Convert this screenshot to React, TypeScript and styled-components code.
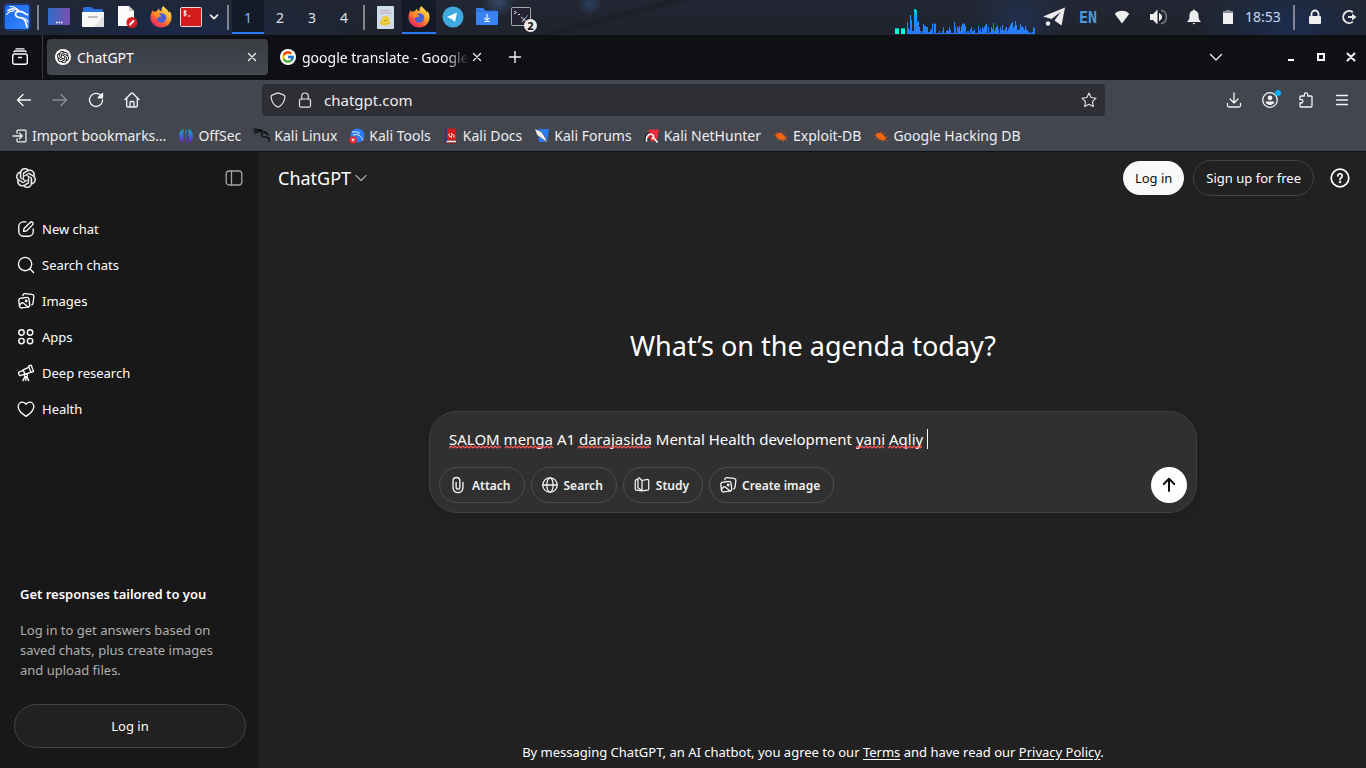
import React from "react";
import styled, { createGlobalStyle, css } from "styled-components";
import { SiKalilinux } from "react-icons/si";
import { FcGoogle } from "react-icons/fc";

const GlobalStyle = createGlobalStyle`
  * { box-sizing: border-box; }
  body {
    margin: 0;
    background: #212121;
    color: #fff;
    font-family: "Noto Sans", "Open Sans", sans-serif;
    font-size: 14px;
  }
  button, input { font: inherit; color: inherit; }
  button { border: 0; padding: 0; background: none; }
  svg { display: block; flex: none; }
`;

const Screen = styled.div`
  display: flex;
  flex-direction: column;
  min-height: 100vh;
`;

/* ---------- Desktop panel ---------- */

const Panel = styled.header`
  display: flex;
  align-items: stretch;
  height: 35px;
  background:
    radial-gradient(ellipse 16px 14px at 498px 2px, #34496a 0%, transparent 100%),
    radial-gradient(ellipse 12px 12px at 590px 4px, #2c3f5e 0%, transparent 100%),
    linear-gradient(165deg, transparent 44%, #1b202b 47%, #1c212c 52%, transparent 55%) 520px 0 / 190px 35px no-repeat,
    radial-gradient(ellipse 200px 40px at 170px 30px, #1b2a47 0%, transparent 100%),
    radial-gradient(ellipse 90px 40px at 1290px 24px, #1c2d4e 0%, transparent 100%),
    radial-gradient(ellipse 50px 30px at 1020px 16px, #222f4c 0%, transparent 100%),
    linear-gradient(#222733, #1f232e);
`;

const PanelCell = styled.button<{ $w?: number; $active?: boolean }>`
  display: flex;
  align-items: center;
  justify-content: center;
  position: relative;
  width: ${(p) => p.$w ?? 34}px;
  padding-bottom: 1px;
  color: #e8e8e8;
  ${(p) =>
    p.$active &&
    css`
      background: #141a28;
      box-shadow: inset 0 -1px #191b22, inset 0 -3px #2777ff;
    `}
`;

const Workspace = styled(PanelCell)`
  color: ${(p) => (p.$active ? "#7fb5f5" : "#e0e0e0")};
`;

const PanelRule = styled.div`
  width: 2px;
  margin: 5px 3px;
  background: #82858c;
`;

const Spring = styled.div`
  flex: 1;
`;

const CountBadge = styled.span`
  position: absolute;
  right: 1px;
  bottom: 3px;
  width: 13px;
  height: 13px;
  border-radius: 50%;
  background: #eee;
  color: #111;
  font-size: 11px;
  font-weight: 700;
  line-height: 13px;
  text-align: center;
`;

const Layout = styled.button`
  width: 34px;
  color: #4d9ad8;
  font-family: "DejaVu Sans Mono", monospace;
  font-size: 15px;
  font-weight: 700;
`;

const Clock = styled.time`
  width: 45px;
  color: #c3d8f0;
  font-size: 14px;
  line-height: 33px;
`;

/* ---------- Browser chrome ---------- */

const TabBar = styled.div`
  display: flex;
  align-items: center;
  height: 45px;
  padding-bottom: 1px;
  background: #0f1014;
  color: #fbfbfe;
`;

const ViewButton = styled.button`
  display: flex;
  align-items: center;
  justify-content: center;
  align-self: stretch;
  width: 43px;
  padding-right: 3px;
  border-right: 1px solid #393a3f;
`;

const Tab = styled.div<{ $active?: boolean }>`
  display: flex;
  align-items: center;
  width: 221px;
  height: 36px;
  margin-left: 4px;
  padding: 0 8px;
  border-radius: 4px;
  font-size: 14px;
  background: ${(p) => (p.$active ? "linear-gradient(#3a3c42, #454850)" : "transparent")};
`;

const TabLabel = styled.span<{ $fade?: boolean }>`
  flex: 1;
  margin-left: 6px;
  overflow: hidden;
  white-space: nowrap;
  ${(p) => p.$fade && css`mask-image: linear-gradient(to left, transparent, #000 24px);`}
`;

const IconButton = styled.button<{ $w?: number; $dim?: boolean }>`
  display: flex;
  align-items: center;
  justify-content: center;
  width: ${(p) => p.$w ?? 36}px;
  height: 36px;
  color: #f4f4f7;
  opacity: ${(p) => (p.$dim ? 0.4 : 1)};
`;

const TabClose = styled(IconButton)`
  width: 16px;
  height: 20px;
`;

const NewTab = styled(IconButton)`
  margin-left: 4px;
`;

const NavBar = styled.div`
  display: flex;
  align-items: center;
  height: 40px;
  padding: 0 6px;
  background: #43464e;
`;

const UrlBar = styled.label`
  display: flex;
  flex: 1;
  align-items: center;
  gap: 11px;
  height: 32px;
  margin: 0 111px 0 112px;
  padding: 0 8px;
  border-radius: 4px;
  background: #2e2f34;
  color: #e4e4e8;
`;

const UrlInput = styled.input`
  flex: 1;
  min-width: 0;
  padding: 0;
  border: 0;
  outline: 0;
  background: none;
  color: #eeeef0;
  font-size: 15px;
`;

const Bookmarks = styled.nav`
  display: flex;
  align-items: center;
  gap: 12px;
  height: 32px;
  padding: 0 12px;
  border-bottom: 1px solid #111215;
  background: #43464e;
`;

const Bookmark = styled.a`
  display: flex;
  align-items: center;
  gap: 4px;
  color: #eeeef0;
  font-size: 14px;
  text-decoration: none;
  white-space: nowrap;
`;

/* ---------- Page ---------- */

const Page = styled.div`
  display: flex;
  flex: 1;
`;

const Sidebar = styled.aside`
  display: flex;
  flex-direction: column;
  width: 260px;
  background: #181818;
  box-shadow: inset -1px 0 #242424;
`;

const SidebarTop = styled.div`
  display: flex;
  align-items: center;
  justify-content: space-between;
  height: 52px;
  padding: 0 16px;
  color: #f3f3f3;
`;

const SideNav = styled.nav`
  display: flex;
  flex: 1;
  flex-direction: column;
  padding: 7px 6px;
`;

const SideLink = styled.a`
  display: flex;
  align-items: center;
  gap: 7px;
  height: 36px;
  padding: 0 11px;
  color: #fff;
  font-size: 13px;
  text-decoration: none;
`;

const Promo = styled.section`
  padding: 0 14px 20px;
`;

const PromoTitle = styled.h2`
  margin: 0 6px 16px;
  font-size: 13px;
  font-weight: 600;
  line-height: 20px;
`;

const PromoText = styled.p`
  margin: 0 16px 24px 6px;
  color: #afafaf;
  font-size: 13px;
  line-height: 20px;
`;

const Pill = styled.button<{ $h: number; $solid?: boolean; $full?: boolean }>`
  width: ${(p) => (p.$full ? "100%" : "auto")};
  height: ${(p) => p.$h}px;
  padding: 0 12px;
  border: ${(p) => (p.$solid ? "0" : "1px solid #424242")};
  border-radius: 22px;
  background: ${(p) => (p.$solid ? "#f9f9f9" : "#212121")};
  color: ${(p) => (p.$solid ? "#0d0d0d" : "#fff")};
  font-size: 13px;
`;

const Main = styled.main`
  display: flex;
  flex: 1;
  flex-direction: column;
  min-width: 0;
`;

const MainHeader = styled.div`
  display: flex;
  align-items: center;
  gap: 9px;
  height: 52px;
  padding: 0 16px 0 18px;
`;

const ModelButton = styled.button`
  display: flex;
  align-items: center;
  gap: 2px;
  font-size: 18px;
`;

const HelpButton = styled.button`
  margin-left: 7px;
`;

const Center = styled.div`
  display: flex;
  flex: 1;
  flex-direction: column;
  align-items: center;
  justify-content: center;
  padding: 0 24px 98px;
`;

const Title = styled.h1`
  margin: 0 0 48px;
  font-size: 27px;
  font-weight: 400;
  line-height: 34px;
`;

const Composer = styled.form`
  width: 100%;
  max-width: 768px;
  padding: 9px;
  border: 1px solid #404040;
  border-radius: 28px;
  background: #303030;
  box-shadow: 0 4px 12px #0000001a;
`;

const PromptField = styled.div`
  position: relative;
  height: 46px;
  padding: 6px 10px;
`;

const PromptInput = styled.input`
  display: block;
  width: 100%;
  height: 24px;
  padding: 0;
  border: 0;
  outline: 0;
  background: none;
  font-size: 15px;
`;

const SpellMarks = styled.svg`
  position: absolute;
  top: 6px;
  left: 10px;
  pointer-events: none;
`;

const Actions = styled.div`
  display: flex;
  align-items: center;
  gap: 6px;
`;

const ActionPill = styled.button`
  display: flex;
  align-items: center;
  gap: 5px;
  height: 36px;
  padding: 0 13px 0 9px;
  border: 1px solid #4d4d4d;
  border-radius: 18px;
  color: #f3f3f3;
  font-size: 12px;
  font-weight: 600;
`;

const SendButton = styled.button`
  display: flex;
  align-items: center;
  justify-content: center;
  width: 36px;
  height: 36px;
  border-radius: 50%;
  background: #fff;
  color: #0d0d0d;
`;

const Legal = styled.footer`
  height: 32px;
  font-size: 13px;
  line-height: 32px;
  text-align: center;

  a { color: inherit; text-underline-offset: 2px; }
`;

/* ---------- Icons ---------- */

type IconProps = { size?: number; color?: string; width?: number; children: React.ReactNode; box?: number };

const Line = ({ size = 20, box = 20, color = "currentColor", width = 1.4, children }: IconProps) => (
  <svg
    width={size}
    height={size}
    viewBox={`0 0 ${box} ${box}`}
    fill="none"
    stroke={color}
    strokeWidth={width}
    strokeLinecap="round"
    strokeLinejoin="round"
    aria-hidden
  >
    {children}
  </svg>
);

const OpenAiMark = ({ size, color }: { size: number; color: string }) => (
  <svg width={size} height={size} viewBox="0 0 24 24" fill={color} stroke={color} strokeWidth=".3" aria-hidden>
    <path d="M22.2819 9.8211a5.9847 5.9847 0 0 0-.5157-4.9108 6.0462 6.0462 0 0 0-6.5098-2.9A6.0651 6.0651 0 0 0 4.9807 4.1818a5.9847 5.9847 0 0 0-3.9977 2.9 6.0462 6.0462 0 0 0 .7427 7.0966 5.98 5.98 0 0 0 .511 4.9107 6.051 6.051 0 0 0 6.5146 2.9001A5.9847 5.9847 0 0 0 13.2599 24a6.0557 6.0557 0 0 0 5.7718-4.2058 5.9894 5.9894 0 0 0 3.9977-2.9001 6.0557 6.0557 0 0 0-.7475-7.0729zm-9.022 12.6081a4.4755 4.4755 0 0 1-2.8764-1.0408l.1419-.0804 4.7783-2.7582a.7948.7948 0 0 0 .3927-.6813v-6.7369l2.02 1.1686a.071.071 0 0 1 .038.052v5.5826a4.504 4.504 0 0 1-4.4945 4.4944zm-9.6607-4.1254a4.4708 4.4708 0 0 1-.5346-3.0137l.142.0852 4.783 2.7582a.7712.7712 0 0 0 .7806 0l5.8428-3.3685v2.3324a.0804.0804 0 0 1-.0332.0615L9.74 19.9502a4.4992 4.4992 0 0 1-6.1408-1.6464zM2.3408 7.8956a4.485 4.485 0 0 1 2.3655-1.9728V11.6a.7664.7664 0 0 0 .3879.6765l5.8144 3.3543-2.0201 1.1685a.0757.0757 0 0 1-.071 0l-4.8303-2.7865A4.504 4.504 0 0 1 2.3408 7.872zm16.5963 3.8558L13.1038 8.364 15.1192 7.2a.0757.0757 0 0 1 .071 0l4.8303 2.7913a4.4944 4.4944 0 0 1-.6765 8.1042v-5.6772a.79.79 0 0 0-.407-.667zm2.0107-3.0231l-.142-.0852-4.7735-2.7818a.7759.7759 0 0 0-.7854 0L9.409 9.2297V6.8974a.0662.0662 0 0 1 .0284-.0615l4.8303-2.7866a4.4992 4.4992 0 0 1 6.6802 4.66zM8.3065 12.863l-2.02-1.1638a.0804.0804 0 0 1-.038-.0567V6.0742a4.4992 4.4992 0 0 1 7.3757-3.4537l-.142.0805L8.704 5.459a.7948.7948 0 0 0-.3927.6813zm1.0976-2.3654l2.602-1.4998 2.6069 1.4998v2.9994l-2.5974 1.4997-2.6067-1.4997Z" />
  </svg>
);

const KaliMenu = () => (
  <svg width="30" height="30" viewBox="0 0 30 30" aria-hidden>
    <defs>
      <linearGradient id="kali" x1="0" y1="0" x2="1" y2="1">
        <stop offset="0" stopColor="#1769f0" />
        <stop offset="1" stopColor="#3a86ff" />
      </linearGradient>
    </defs>
    <rect x="1" y="1" width="28" height="28" rx="5" fill="#1b5fd8" opacity=".35" />
    <rect x="3" y="3" width="24" height="24" rx="2" fill="url(#kali)" />
    <g fill="none" stroke="#fff" strokeLinecap="round">
      <path d="M6 8.500c4-2.500 8-2 11 .8" strokeWidth="1.600" />
      <path d="M8 4.500c4 0 7 1.500 9 4.800" strokeWidth="1.200" />
      <path d="M4.500 12.500c2.500-3 5-4 8-3.500" strokeWidth="1.100" />
      <path d="M17 9.300c-3.500 0-4.500 3-2.500 5 2 1.800 5 1 7.300 2.700 1.800 1.500 2.200 4 3.200 8" strokeWidth="1.700" />
      <path d="M17 9.300c3 0 5 1 6.500 2.700l2 .6" strokeWidth="1.700" />
      <path d="M19.500 16c3.500.3 5.500 1.500 6.500 4" strokeWidth="1.200" />
    </g>
  </svg>
);

const ShowDesktop = () => (
  <svg width="22" height="18" viewBox="0 0 22 18" aria-hidden>
    <defs>
      <linearGradient id="desk" x1="0" y1="0" x2="1" y2="0">
        <stop offset="0" stopColor="#2f6cc9" />
        <stop offset="1" stopColor="#7a4fb0" />
      </linearGradient>
    </defs>
    <rect width="22" height="17" rx="1" fill="url(#desk)" />
    <path d="M8 14.500h1.500M10.500 14.500h1.500M13 14.500h1.500" stroke="#fff" strokeWidth="1.400" />
  </svg>
);

const Folder = () => (
  <svg width="22" height="20" viewBox="0 0 22 20" aria-hidden>
    <path d="M1 2a2 2 0 0 1 2-2h6l3 2h7a2 2 0 0 1 2 2v5H1z" fill="#2a6fdb" />
    <path d="M0 5h22v14a1 1 0 0 1-1 1H1a1 1 0 0 1-1-1z" fill="#f7f7f7" />
    <path d="M12 20 22 8v11a1 1 0 0 1-1 1z" fill="#e2e2e2" />
    <rect x="6" y="9" width="10" height="2" rx="1" fill="#bcbcbc" />
  </svg>
);

const EditDoc = () => (
  <svg width="22" height="22" viewBox="0 0 22 22" aria-hidden>
    <path d="M2 0h11l5 5v15H2z" fill="#fbfbfb" />
    <path d="M13 0l5 5h-5z" fill="#c8c8c8" />
    <circle cx="16" cy="16.500" r="5.500" fill="#d41e24" />
    <path d="M13.500 19l4.500-4.500" stroke="#fff" strokeWidth="2" />
  </svg>
);

const Firefox = () => (
  <svg width="22" height="22" viewBox="0 0 22 22" aria-hidden>
    <defs>
      <linearGradient id="fox" x1=".9" y1="0" x2=".2" y2="1">
        <stop offset="0" stopColor="#fff36b" />
        <stop offset=".4" stopColor="#ffab2e" />
        <stop offset=".7" stopColor="#ff5a36" />
        <stop offset="1" stopColor="#e31b6d" />
      </linearGradient>
    </defs>
    <path
      d="M13.500 0c1 2 4.500 3.500 5.300 6.500.6-.2.700-1 .6-1.700C21 7 21.600 9 21.500 11.500 21.300 17.500 17 21.500 11 21.500S.5 17 .5 11.500c0-3 .8-5.500 2.500-7.500.1 1 .2 1.500.6 2C4.500 5.500 6 5 7 5.200 7.500 4 8.500 3 9.500 2.800c-.3.800-.3 1.500 0 2 1 .2 1.500.1 2 .1C11 3.500 12 1 13.500 0z"
      fill="url(#fox)"
    />
    <circle cx="11.500" cy="12" r="4.800" fill="#4a62d8" />
    <path d="M4 7.500c2.500-1 5 0 6.500 1.500 1 1 .5 1.800-.7 2-1.300.1-2.300.4-2.300 1.500-1.500-.5-3-2.500-3.500-5z" fill="#ff8a23" />
  </svg>
);

const RootTerminal = () => (
  <svg width="22" height="20" viewBox="0 0 22 20" aria-hidden>
    <rect x=".5" y=".5" width="21" height="19" rx="1" fill="#d21b1b" stroke="#f0d8d8" />
    <path d="M6.500 4.500c-1-.8-2.800-.5-2.800.6 0 1.300 2.800.8 2.800 2.200 0 1.100-2 1.400-3 .5M5 3v6.500M8 9h2.500" stroke="#fff" fill="none" />
  </svg>
);

const Notes = () => (
  <svg width="17" height="23" viewBox="0 0 17 23" aria-hidden>
    <rect width="17" height="23" rx="1" fill="#cfdcec" />
    <path d="M4 4.500h9M2.500 7h12" stroke="#c59aa4" strokeWidth=".8" />
    <circle cx="8.500" cy="14" r="4" fill="#f0cf3c" />
    <path d="M4 15v2.500c3 1.500 6 1.500 9-1" stroke="#e8c23a" strokeWidth="2" fill="none" />
    <path d="M7 14c1 1.200 2.500 1 3.500-.3" stroke="#a87a18" strokeWidth=".8" fill="none" />
  </svg>
);

const TelegramDisc = () => (
  <svg width="22" height="22" viewBox="0 0 22 22" aria-hidden>
    <circle cx="11" cy="11" r="10.500" fill="#3fa9e0" />
    <path d="M5 11l10-4.500-2 9.500-3.500-3z" fill="#fff" />
  </svg>
);

const DownloadFolder = () => (
  <svg width="22" height="18" viewBox="0 0 22 18" aria-hidden>
    <path d="M0 3V1a1 1 0 0 1 1-1h6l3 3h11a1 1 0 0 1 1 1v12a1 1 0 0 1-1 1H1a1 1 0 0 1-1-1z" fill="#3b82f0" />
    <path d="M1 3h20" stroke="#2a62c4" />
    <path d="M11 6v6M8.500 9.800 11 12.300l2.500-2.500M8 13.500h6" stroke="#e8f0ff" strokeWidth="1.200" fill="none" />
  </svg>
);

const Terminal = () => (
  <svg width="20" height="20" viewBox="0 0 20 20" aria-hidden>
    <rect x=".5" y=".5" width="19" height="18" rx="1" fill="#242131" stroke="#aaa6b0" />
    <path d="M3 4l2.500 1.500L3 7M7 7.500h2M10 10l6 5M16 9l-5 6" stroke="#d8d8e4" fill="none" />
    <path d="M14 11l3-3" stroke="#3e7fd0" />
  </svg>
);

const spectrumBars = [
  12, 6, 4, 19, 14, 3, 3, 25, 25, 24, 12, 13, 7, 3, 1, 3, 10, 8, 8, 7, 7, 2, 2, 4, 5, 10, 1, 11, 10, 1, 1, 1, 3,
  1, 1, 3, 7, 1, 1, 3, 4, 3, 7, 4, 1, 1, 1, 12, 7, 1, 8, 6, 8, 3, 8, 10, 11, 10, 8, 1, 3, 3, 1, 5, 7, 3, 3, 5, 1, 1,
  1, 8, 3, 5, 2, 7, 5, 7, 9, 10, 1, 7, 1, 2, 7, 5, 11, 3, 6, 7, 9, 5, 1, 7, 4, 9, 4, 3, 6, 7, 3, 5, 7, 9, 11, 12, 6,
  8, 13, 9, 4, 4, 5, 10, 7, 8, 6, 4, 8, 5, 3, 3, 1, 2, 1, 2, 7, 6,
];

const Spectrum = () => (
  <svg width="142" height="35" viewBox="0 0 142 35" aria-hidden>
    <defs>
      <linearGradient id="spec" gradientUnits="userSpaceOnUse" x1="0" y1="8" x2="0" y2="34">
        <stop offset="0" stopColor="#14c8e8" />
        <stop offset=".5" stopColor="#1e90ff" />
        <stop offset="1" stopColor="#2777ff" />
      </linearGradient>
    </defs>
    <path d="M0 28h4v6H0zM6 28h4v6H6z" fill="#00ffd8" />
    <path d="M0 28.500h4M6 28.500h4" stroke="#0bb0a0" />
    <g fill="url(#spec)">
      {spectrumBars.map((h, i) => (
        <rect key={i} x={12 + i} y={34 - h} width="1" height={h} />
      ))}
    </g>
  </svg>
);

const Wifi = () => (
  <svg width="16" height="14" viewBox="0 0 16 14" fill="#efefef" aria-hidden>
    <path d="M8 13.500.8 4C2.500 1.800 5 .8 8 .8s5.500 1 7.200 3.200z" />
  </svg>
);

const Speaker = () => (
  <svg width="18" height="16" viewBox="0 0 18 16" aria-hidden>
    <path d="M1 5h3l4.500-4.500v15L4 11H1z" fill="#efefef" />
    <path d="M10.500 4.500a4 4 0 0 1 0 7z" fill="#efefef" stroke="#efefef" />
    <path d="M12 1.200a7 7 0 0 1 0 13.600" fill="none" stroke="#777b84" strokeWidth="1.500" />
  </svg>
);

const Bell = () => (
  <svg width="16" height="16" viewBox="0 0 16 16" fill="#efefef" aria-hidden>
    <path d="M7 1.500a1 1 0 0 1 2 0C11.500 2 12.500 4 12.500 6.500c0 3 .5 4.500 2.500 6.500H1c2-2 2.500-3.500 2.500-6.500C3.500 4 4.500 2 7 1.500zM6.500 14h3l-1.500 1.500z" />
  </svg>
);

const Battery = () => (
  <svg width="12" height="16" viewBox="0 0 12 16" aria-hidden>
    <path d="M4 1h4v1h3v2H1V2h3z" fill="#8a8d94" />
    <path d="M1 4h10v11H1z" fill="#efefef" />
  </svg>
);

const PanelLock = () => (
  <svg width="14" height="16" viewBox="0 0 14 16" aria-hidden>
    <path d="M3.500 7V5a3.500 3.500 0 0 1 7 0v2" fill="none" stroke="#efefef" strokeWidth="1.800" />
    <rect x="1" y="7" width="12" height="8" rx="1" fill="#efefef" />
  </svg>
);

const LogOutIcon = () => (
  <svg width="18" height="16" viewBox="0 0 18 16" aria-hidden>
    <path d="M12.800 3.200a6 6 0 1 0 0 9.600" fill="none" stroke="#e4e4e4" strokeWidth="2" />
    <path d="M8 7h4V4.500L16.500 8 12 11.500V9H8z" fill="#e4e4e4" />
  </svg>
);

const Cross = ({ size = 10, width = 1.2 }: { size?: number; width?: number }) => (
  <Line size={size} box={10} width={width}>
    <path d="M1.500 1.500l7 7M8.500 1.500l-7 7" />
  </Line>
);

const ImagesIcon = ({ size = 18 }: { size?: number }) => (
  <Line size={size} width={1.5}>
    <path d="M4.300 6.900l6.400-.9a2.300 2.300 0 0 1 2.600 2l.8 6.200a2.300 2.300 0 0 1-2 2.600l-6.700.9a2.300 2.300 0 0 1-2.600-2l-.8-6.200a2.300 2.300 0 0 1 2.300-2.600z" />
    <path d="M2.700 14.800l2.100-2.300a1.600 1.600 0 0 1 2.200-.2l5.400 4.400" />
    <path d="M6.500 4a2.300 2.300 0 0 1 2.600-2.200l7.400.9A2.300 2.300 0 0 1 18.700 5.300l-.9 7.200a2.300 2.300 0 0 1-1.300 1.700" />
    <circle cx="10.200" cy="10" r=".8" fill="currentColor" />
  </Line>
);

const sideItems: [string, React.ReactNode][] = [
  [
    "New chat",
    <Line size={18} width={1.5}>
      <path d="M10 2H7A5 5 0 0 0 2 7v6a5 5 0 0 0 5 5h6a5 5 0 0 0 5-5V10" />
      <path d="M7.300 12.700l.5-3.200 6.800-6.800a1.900 1.900 0 0 1 2.700 2.700l-6.800 6.800z" />
    </Line>,
  ],
  [
    "Search chats",
    <Line size={18} width={1.5}>
      <circle cx="9" cy="9" r="7.400" />
      <path d="M14.400 14.400l4 4" />
    </Line>,
  ],
  ["Images", <ImagesIcon />],
  [
    "Apps",
    <Line size={18} width={1.6}>
      <circle cx="5" cy="5" r="3" />
      <circle cx="14.500" cy="5" r="3" />
      <circle cx="5" cy="14.500" r="3" />
      <circle cx="14.500" cy="14.500" r="3" />
    </Line>,
  ],
  [
    "Deep research",
    <Line size={18} width={1.5}>
      <path d="M12.800 2.300l2.900-1.100 2.700 7-2.900 1.100zM12.900 3.800L6.800 6.500l2 5 6.300-2.100M6.900 7.200L2.300 9a1 1 0 0 0-.6 1.300l.8 2a1 1 0 0 0 1.300.6l4.500-1.700" />
      <circle cx="9.800" cy="12.500" r="1.700" />
      <path d="M8.800 14l-2.200 4.500M10.800 14l2.200 4.500M9.800 14.300v4" />
    </Line>,
  ],
  [
    "Health",
    <Line size={18} width={1.5}>
      <path d="M10 18.200C6 15.500 1.300 12 1.300 7.400 1.300 4.400 3.500 2.400 6 2.400c1.700 0 3.200.8 4 2.400.8-1.600 2.300-2.400 4-2.400 2.500 0 4.700 2 4.700 5 0 4.600-4.700 8.100-8.700 10.800z" />
    </Line>,
  ],
];

const Bug = () => (
  <svg width="16" height="16" viewBox="0 0 16 16" aria-hidden>
    <path d="M3.500 6c2-2 5-1.500 6.500.5s3.500 3 2.500 4.500-4.500 1.500-6.500 0S2 7.500 3.500 6z" fill="#f26411" />
    <path d="M3 4l2 2M1 7h3M2.500 10.500 5 9M5 12.500l2-2M8 3.500 8 6M12 5l-2 2.500M14.500 9 12 9.500M14.500 13 12 11M10 14l-.5-2" stroke="#e05a10" strokeWidth=".8" />
  </svg>
);

const bookmarks: [string, React.ReactNode][] = [
  [
    "Import bookmarks…",
    <Line size={16} box={16} width={1.3}>
      <path d="M5 5V3.200a1 1 0 0 1 1-1h7a1 1 0 0 1 1 1v9.600a1 1 0 0 1-1 1H6a1 1 0 0 1-1-1V11M1 8h9M7.500 5.300 10.200 8l-2.700 2.700" />
    </Line>,
  ],
  [
    "OffSec",
    <svg width="16" height="16" viewBox="0 0 16 16" aria-hidden>
      <defs>
        <linearGradient id="offsec" gradientUnits="userSpaceOnUse" x1="0" y1="1" x2="0" y2="15">
          <stop offset="0" stopColor="#16b0c8" />
          <stop offset="1" stopColor="#6a1bd8" />
        </linearGradient>
      </defs>
      <path d="M5.500 1v14C2.500 13.800 1 11 1 8s1.500-5.800 4.500-7zM7.400 1.500h1.200v13H7.400zM10.500 1C13.500 2.200 15 5 15 8s-1.500 5.800-4.500 7z" fill="url(#offsec)" />
    </svg>,
  ],
  ["Kali Linux", <SiKalilinux size={17} color="#0c0c0e" stroke="#0c0c0e" strokeWidth={1} />],
  [
    "Kali Tools",
    <svg width="16" height="16" viewBox="0 0 16 16" aria-hidden>
      <circle cx="8.500" cy="7.500" r="7" fill="#2a7bf6" />
      <path d="M3 4c3-.5 6 0 8 1.500M4 7c3-1 6-.5 7.500 1.500s2 2 2.500 4" stroke="#e8f1ff" fill="none" />
      <circle cx="4" cy="12" r="3.800" fill="#e3242b" />
      <path d="M2.300 11h3.400M3.400 11v2.500M4.800 11v2.500" stroke="#fff" strokeWidth=".8" />
    </svg>,
  ],
  [
    "Kali Docs",
    <svg width="16" height="16" viewBox="0 0 16 16" aria-hidden>
      <path d="M2 .5h11v12H4a2 2 0 0 0-2 2z" fill="#d61a1a" />
      <path d="M2 .5h2v14H2z" fill="#273a78" />
      <path d="M4 12.800h9v1.800H3z" fill="#eee" />
      <path d="M3 14.500h10v1H3z" fill="#a51212" />
      <path d="M6 5.500v2c0 1.500 2.500 1.500 2.500 0s2.500-1.500 2.500 0v2M8.500 5v1M8.500 8.500v1.500" stroke="#fff" fill="none" />
    </svg>,
  ],
  [
    "Kali Forums",
    <svg width="16" height="16" viewBox="0 0 16 16" aria-hidden>
      <path d="M3 1h12l-2 13H5z" fill="#2a7bf6" />
      <path d="M.5.800 7 3.500l3 4 3.500 7-5-3.500L3 7z" fill="#f4f4f4" stroke="#333" strokeWidth=".5" />
    </svg>,
  ],
  [
    "Kali NetHunter",
    <svg width="16" height="16" viewBox="0 0 16 16" aria-hidden>
      <path d="M5 1.500h10l-2 10L8 14 3 9z" fill="#ec2a3a" />
      <path d="M2.500 13.500C1.500 10 4 5 8 6.500c2.500 1 2 4-.5 3.500M8.500 10c2 .5 3.500 2 5 4.500" stroke="#f2f2f2" strokeWidth="1.800" fill="none" />
      <path d="M1 13c-.5-4 1.500-8 5-8.500M5 12c0-2 1-3 2.500-3" stroke="#151515" fill="none" />
    </svg>,
  ],
  ["Exploit-DB", <Bug />],
  ["Google Hacking DB", <Bug />],
];

/* Horizontal extents of the misspelled words in the prompt. */
const misspelled = [
  [0, 53],
  [56, 105],
  [129, 202],
  [407, 436],
  [439, 474],
];

const squiggle = ([from, to]: number[]) => {
  let d = `M${from} 21`;
  for (let x = from, up = true; x + 2 <= to; x += 2, up = !up) d += `L${x + 2} ${up ? 19 : 21}`;
  return d;
};

/* ---------- App ---------- */

export default function App() {
  return (
    <Screen>
      <GlobalStyle />
      <Panel>
        <PanelCell aria-label="Applications"><KaliMenu /></PanelCell>
        <PanelRule />
        <PanelCell aria-label="Show desktop"><ShowDesktop /></PanelCell>
        <PanelCell aria-label="Files"><Folder /></PanelCell>
        <PanelCell aria-label="Text editor"><EditDoc /></PanelCell>
        <PanelCell aria-label="Firefox"><Firefox /></PanelCell>
        <PanelCell aria-label="Root terminal" $w={26}><RootTerminal /></PanelCell>
        <PanelCell aria-label="More terminals" $w={20}>
          <Line size={10} box={10} width={1.7}><path d="M1.500 3.200 5 6.700l3.500-3.500" /></Line>
        </PanelCell>
        <PanelRule />
        <Workspace $w={32} $active>1</Workspace>
        <Workspace $w={32}>2</Workspace>
        <Workspace $w={32}>3</Workspace>
        <Workspace $w={32}>4</Workspace>
        <PanelRule />
        <PanelCell aria-label="Notes"><Notes /></PanelCell>
        <PanelCell aria-label="Firefox window" $active><Firefox /></PanelCell>
        <PanelCell aria-label="Telegram"><TelegramDisc /></PanelCell>
        <PanelCell aria-label="Downloads"><DownloadFolder /></PanelCell>
        <PanelCell aria-label="Terminals"><Terminal /><CountBadge>2</CountBadge></PanelCell>
        <Spring />
        <Spectrum />
        <PanelCell aria-label="Telegram status">
          <svg width="22" height="20" viewBox="0 0 22 20" fill="#ececec" aria-hidden>
            <path d="M0 9.500 22 .5 18.500 18.500 11.500 13.500 17.500 5 8.500 12z" />
            <circle cx="5" cy="16.500" r="2.200" />
          </svg>
        </PanelCell>
        <Layout>EN</Layout>
        <PanelCell aria-label="Network"><Wifi /></PanelCell>
        <PanelCell aria-label="Volume" $w={38}><Speaker /></PanelCell>
        <PanelCell aria-label="Notifications"><Bell /></PanelCell>
        <PanelCell aria-label="Battery"><Battery /></PanelCell>
        <Clock>18:53</Clock>
        <PanelRule />
        <PanelCell aria-label="Lock screen"><PanelLock /></PanelCell>
        <PanelCell aria-label="Log out"><LogOutIcon /></PanelCell>
      </Panel>

      <TabBar>
        <ViewButton aria-label="Recent browsing">
          <Line size={18} box={18} width={1.4}>
            <rect x="1.700" y="6" width="14.600" height="10.300" rx="2" />
            <path d="M3 3.700c.4-.5.900-.7 1.500-.7h9c.6 0 1.100.2 1.500.7M5 .9h8M7.500 9.500h3" />
          </Line>
        </ViewButton>
        <Tab $active>
          <svg width="16" height="16" viewBox="0 0 16 16" aria-hidden>
            <circle cx="8" cy="8" r="8" fill="#fff" />
            <g transform="translate(2 2)"><OpenAiMark size={12} color="#111" /></g>
          </svg>
          <TabLabel>ChatGPT</TabLabel>
          <TabClose aria-label="Close ChatGPT tab"><Cross /></TabClose>
        </Tab>
        <Tab>
          <svg width="16" height="16" viewBox="0 0 16 16" aria-hidden>
            <circle cx="8" cy="8" r="8" fill="#fff" />
            <g transform="translate(1 1)"><FcGoogle size={14} /></g>
          </svg>
          <TabLabel $fade>google translate - Google</TabLabel>
          <TabClose aria-label="Close google translate tab"><Cross /></TabClose>
        </Tab>
        <NewTab aria-label="New tab">
          <Line size={14} box={14} width={1.4}><path d="M7 1.500v11M1.500 7h11" /></Line>
        </NewTab>
        <Spring />
        <IconButton $w={120} aria-label="List all tabs">
          <Line size={14} box={14} width={1.3}><path d="M1.500 4.500 7 10l5.500-5.500" /></Line>
        </IconButton>
        <IconButton $w={30} aria-label="Minimize">
          <svg width="10" height="10" viewBox="0 0 10 10" aria-hidden><path d="M2 7h6v2H2z" fill="#fff" /></svg>
        </IconButton>
        <IconButton $w={30} aria-label="Maximize">
          <svg width="10" height="10" viewBox="0 0 10 10" aria-hidden><path d="M2 2h6v6H2z" fill="none" stroke="#fff" strokeWidth="2" /></svg>
        </IconButton>
        <IconButton $w={30} aria-label="Close window"><Cross width={2} /></IconButton>
      </TabBar>

      <NavBar>
        <IconButton aria-label="Back">
          <Line size={16} box={16} width={1.4}><path d="M14.500 8H1.500M7 2.500 1.500 8 7 13.500" /></Line>
        </IconButton>
        <IconButton aria-label="Forward" $dim>
          <Line size={16} box={16} width={1.4}><path d="M1 8h13.500M9 2.500 14.500 8 9 13.500" /></Line>
        </IconButton>
        <IconButton aria-label="Reload">
          <Line size={16} box={16} width={1.3}><path d="M13.500 4.500A6.500 6.500 0 1 0 14.500 8" /><path d="M14.500 1.500v4.300h-4.300z" fill="currentColor" /></Line>
        </IconButton>
        <IconButton aria-label="Home">
          <Line size={16} box={16} width={1.3}><path d="M1 7.500 7.300 1.300a1 1 0 0 1 1.400 0L15 7.500M2.700 6.500V14a1 1 0 0 0 1 1h8.600a1 1 0 0 0 1-1V6.500M6 15v-4.500a1 1 0 0 1 1-1h2a1 1 0 0 1 1 1V15" /></Line>
        </IconButton>
        <UrlBar>
          <Line size={16} box={16} width={1.2}><path d="M8 .9l6 2.200c.6.200.9.700.9 1.300C14.700 9.500 12.500 13 8 15.200 3.500 13 1.300 9.500 1.100 4.400c0-.6.300-1.100.9-1.300z" /></Line>
          <Line size={16} box={16} width={1.2}><rect x="2.500" y="7" width="11" height="8.200" rx="1.500" /><path d="M4.700 7V4.300a3.300 3.300 0 0 1 6.600 0V7" /></Line>
          <UrlInput aria-label="Address" defaultValue="chatgpt.com" />
          <Line size={16} box={16} width={1.1}><path d="M8 1l2.100 4.500 4.900.7-3.500 3.400.8 4.900L8 12.200l-4.300 2.300.8-4.900L1 6.200l4.900-.7z" /></Line>
        </UrlBar>
        <IconButton aria-label="Downloads list">
          <Line size={16} box={16} width={1.3}><path d="M8 1v9.500M4 7l4 4 4-4M1.500 11.500v2a1.500 1.500 0 0 0 1.500 1.500h10a1.500 1.500 0 0 0 1.500-1.500v-2" /></Line>
        </IconButton>
        <IconButton aria-label="Account">
          <svg width="22" height="20" viewBox="-1 0 22 20" aria-hidden>
            <circle cx="10" cy="10" r="7.300" fill="none" stroke="#f4f4f7" strokeWidth="1.300" />
            <circle cx="10" cy="7.800" r="2.400" fill="#f4f4f7" />
            <path d="M5.500 11.500h9c-.3 2.200-2.200 3.500-4.500 3.500s-4.200-1.300-4.500-3.500z" fill="#f4f4f7" />
            <circle cx="18" cy="3" r="3" fill="#00b0f5" />
          </svg>
        </IconButton>
        <IconButton aria-label="Extensions">
          <Line size={16} box={16} width={1.3}><path d="M6.300 4V2.600a1.700 1.700 0 0 1 3.400 0V4H13a1 1 0 0 1 1 1v9a1 1 0 0 1-1 1H3a1 1 0 0 1-1-1v-3h1.300a1.600 1.600 0 0 0 0-3.300H2V5a1 1 0 0 1 1-1z" /></Line>
        </IconButton>
        <IconButton aria-label="Menu">
          <Line size={16} box={16} width={1.3}><path d="M2.500 3.500h11M2.500 8h11M2.500 12.500h11" /></Line>
        </IconButton>
      </NavBar>

      <Bookmarks>
        {bookmarks.map(([label, icon]) => (
          <Bookmark key={label} href="#">{icon}{label}</Bookmark>
        ))}
      </Bookmarks>

      <Page>
        <Sidebar>
          <SidebarTop>
            <OpenAiMark size={20} color="#f3f3f3" />
            <button aria-label="Close sidebar">
              <Line size={20} color="#a5a5a5" width={1.3}><rect x="2.200" y="3" width="15.600" height="14" rx="3" /><path d="M7.500 3v14" /></Line>
            </button>
          </SidebarTop>
          <SideNav>
            {sideItems.map(([label, icon]) => (
              <SideLink key={label} href="#">{icon}{label}</SideLink>
            ))}
          </SideNav>
          <Promo>
            <PromoTitle>Get responses tailored to you</PromoTitle>
            <PromoText>Log in to get answers based on saved chats, plus create images and upload files.</PromoText>
            <Pill $h={44} $full>Log in</Pill>
          </Promo>
        </Sidebar>

        <Main>
          <MainHeader>
            <ModelButton>
              ChatGPT
              <Line size={16} box={16} color="#a5a5a5" width={1.3}><path d="M3 5.500 8 10.500 13 5.500" /></Line>
            </ModelButton>
            <Spring />
            <Pill $h={34} $solid>Log in</Pill>
            <Pill $h={36}>Sign up for free</Pill>
            <HelpButton aria-label="Help">
              <Line size={20} width={1.7}><circle cx="10" cy="10" r="8.800" /><path d="M7.800 8a2.200 2.200 0 1 1 3.400 1.800c-.8.500-1.200.9-1.200 1.700" /><circle cx="10" cy="14" r=".4" fill="currentColor" /></Line>
            </HelpButton>
          </MainHeader>
          <Center>
            <Title>What’s on the agenda today?</Title>
            <Composer onSubmit={(e) => e.preventDefault()}>
              <PromptField>
                <PromptInput
                  aria-label="Message"
                  spellCheck={false}
                  defaultValue="SALOM menga A1 darajasida Mental Health development yani Aqliy "
                />
                <SpellMarks width="490" height="24" viewBox="0 0 490 24" aria-hidden>
                  <path d={misspelled.map(squiggle).join("")} fill="none" stroke="#ff5c5c" strokeWidth="1.200" />
                  <path d="M478.500 2v20" stroke="#fff" />
                </SpellMarks>
              </PromptField>
              <Actions>
                <ActionPill type="button">
                  <Line size={18} width={1.5}><path d="M15.500 7v6a5.500 5.500 0 0 1-11 0V5.500a3.800 3.800 0 0 1 7.600 0v7a2.100 2.100 0 0 1-4.200 0V7" /></Line>
                  Attach
                </ActionPill>
                <ActionPill type="button">
                  <Line size={18} width={1.4}><circle cx="10" cy="10" r="8" /><ellipse cx="10" cy="10" rx="3.500" ry="8" /><path d="M2 10h16" /></Line>
                  Search
                </ActionPill>
                <ActionPill type="button">
                  <Line size={18} width={1.4}><path d="M10 16.500 4 15.800a1.500 1.500 0 0 1-1.500-1.500V5.500A1.500 1.500 0 0 1 4 4h1.500M10 16.500V5L7 2.200A1 1 0 0 0 5.500 3v10L10 16.500l6-.7a1.500 1.500 0 0 0 1.500-1.500V5.300A1.500 1.500 0 0 0 16 3.800L10 5" /></Line>
                  Study
                </ActionPill>
                <ActionPill type="button"><ImagesIcon /> Create image</ActionPill>
                <Spring />
                <SendButton aria-label="Send"><Line size={20} width={2}><path d="M10 16V4M4.800 9 10 3.800 15.200 9" /></Line></SendButton>
              </Actions>
            </Composer>
          </Center>
          <Legal>
            By messaging ChatGPT, an AI chatbot, you agree to our <a href="#">Terms</a> and have read our{" "}
            <a href="#">Privacy Policy</a>.
          </Legal>
        </Main>
      </Page>
    </Screen>
  );
}
